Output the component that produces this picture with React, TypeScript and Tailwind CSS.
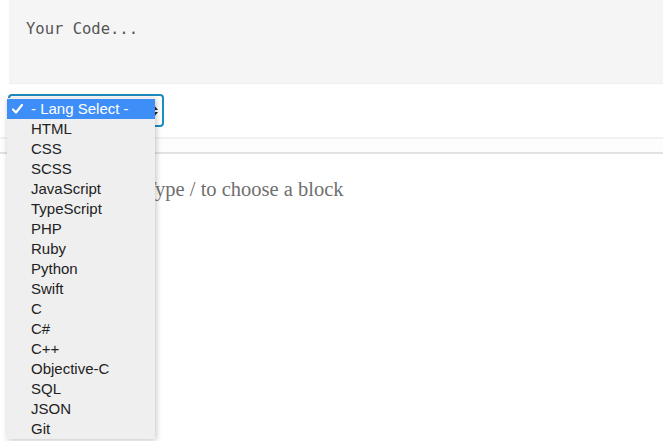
const langs = [
  "HTML",
  "CSS",
  "SCSS",
  "JavaScript",
  "TypeScript",
  "PHP",
  "Ruby",
  "Python",
  "Swift",
  "C",
  "C#",
  "C++",
  "Objective-C",
  "SQL",
  "JSON",
  "Git",
];

const App: React.FC = () => {
  return (
    <div className="relative w-[663px] h-[441px] overflow-hidden bg-white">
      {/* code block */}
      <div className="ml-[9px] h-[84px] bg-[#f5f5f5] border-b border-[#efefef] px-[17px] pt-[18px] font-['DejaVu_Sans_Mono',monospace] text-[15.5px] text-[#555]">
        Your Code...
      </div>

      {/* language select row (label sits under the open menu) */}
      <div className="h-[53px] pl-[8px] pt-[10px]">
        <div className="flex items-center justify-end w-[156px] h-[33px] border-2 border-[#1e8cbe] rounded-[4px] px-[4px]">
          <svg width="8" height="12" viewBox="0 0 8 12" className="text-[#222]">
            <path d="M4 0 L8 5 H0 Z M4 12 L0 7 H8 Z" fill="currentColor" />
          </svg>
        </div>
      </div>

      <div className="h-[17px] border-t-2 border-[#f1f1f1] border-b-2 border-b-[#e2e2e2] bg-[#fdfdfd]" />

      <div className="pl-[144px] pt-[20px] font-['Liberation_Serif',serif] text-[20.5px] text-[#6f6f6f]">
        Type / to choose a block
      </div>

      {/* open dropdown menu */}
      <div className="absolute left-[7px] top-[98px] w-[148px] bg-[#efefef] pt-[1px] shadow-[1px_1px_6px_rgba(0,0,0,0.25)] font-['Liberation_Sans',sans-serif] text-[15px] text-[#222]">
        <div className="relative flex items-center h-[20px] bg-[#3d8ef7] text-white pl-[24px]">
          <svg width="11" height="10" viewBox="0 0 11 10" className="absolute left-[5px] top-[5px]">
            <path d="M1 5.5 L4 8.5 L10 1" fill="none" stroke="white" strokeWidth="2.2" strokeLinecap="round" strokeLinejoin="round" />
          </svg>
          - Lang Select -
        </div>
        {langs.map((l) => (
          <div key={l} className="flex items-center h-[20px] pl-[24px]">
            {l}
          </div>
        ))}
      </div>
    </div>
  );
};

export default App;
